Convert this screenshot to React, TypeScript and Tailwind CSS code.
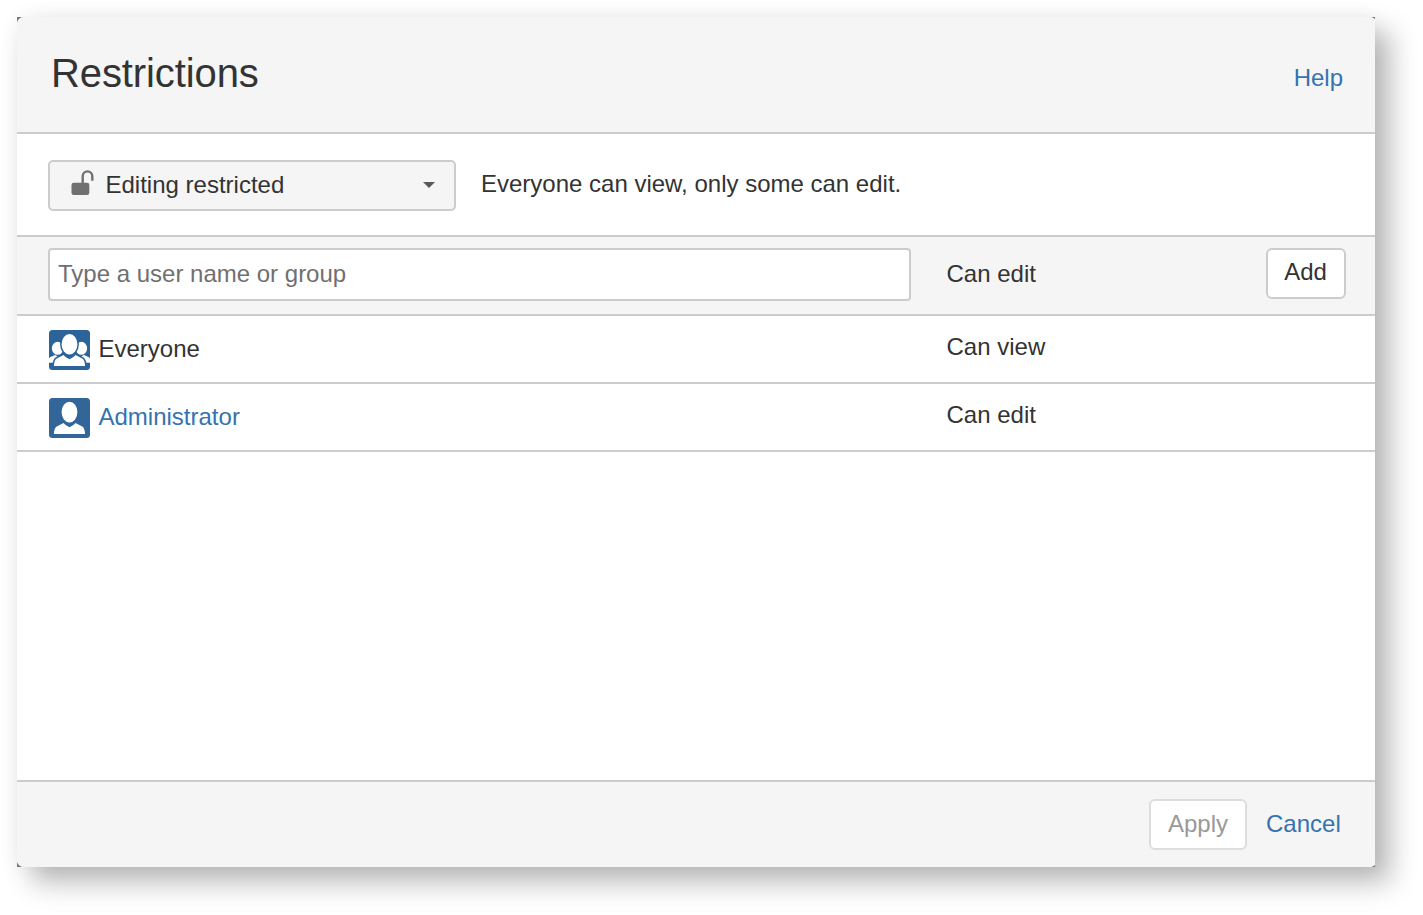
import type { ReactNode } from "react";

const BUST = "M4.900 36c.3-4.800 1.200-6.800 3.800-8l5.800-2.900q1.900 2.700 6 4.100 4.100-1.400 6-4.100l5.800 2.900c2.600 1.200 3.500 3.200 3.800 8z";

function UnlockIcon() {
  return (
    <svg className="ml-[21px] mt-2 h-[26px] w-6 shrink-0" viewBox="0 0 24 26" fill="none">
      <rect x="0.5" y="12.7" width="17.8" height="12.3" rx="2.2" fill="#707070" />
      <path d="M11.700 13V6.200a4.800 4.800 0 0 1 9.600 0V10.800" stroke="#707070" strokeWidth="2.4" />
    </svg>
  );
}

function GroupAvatar() {
  return (
    <svg className="mt-[14px] h-10 w-[41px] shrink-0" viewBox="0 0 41 40">
      <rect width="41" height="40" rx="3.5" fill="#2c6399" />
      <g fill="#fff">
        <ellipse cx="8.600" cy="18.300" rx="5.700" ry="6.500" />
        <ellipse cx="32.400" cy="18.300" rx="5.700" ry="6.500" />
        <path d="M0 32.800V28.700q0-1 1-1.500l5-2.200 4 2v5.800zM41 32.800V28.700q0-1-1-1.500l-5-2.200-4 2v5.800z" />
      </g>
      <path d={BUST} fill="#2c6399" stroke="#2c6399" strokeWidth="3.4" />
      <ellipse cx="20.500" cy="14.300" rx="9.400" ry="11.600" fill="#2c6399" />
      <path d={BUST} fill="#fff" />
      <ellipse cx="20.500" cy="14.300" rx="7.900" ry="10.300" fill="#fff" />
    </svg>
  );
}

function UserAvatar() {
  return (
    <svg className="mt-[14px] h-10 w-[41px] shrink-0" viewBox="0 0 41 40">
      <rect width="41" height="40" rx="3.5" fill="#326598" />
      <g fill="#fff">
        <path d={BUST} />
        <ellipse cx="20.500" cy="14.100" rx="7.900" ry="10.300" />
      </g>
    </svg>
  );
}

function PermissionRow({ avatar, name, permission }: { avatar: ReactNode; name: ReactNode; permission: string }) {
  return (
    <li className="flex h-[68px] border-b-2 border-[#ccc] pl-8">
      {avatar}
      <div className="ml-[8.5px] mt-[19px] w-[848px]">{name}</div>
      <div className="mt-[17px]">{permission}</div>
    </li>
  );
}

export default function App() {
  return (
    <main className="h-[915px] w-[1423px] overflow-hidden bg-white p-[17px] font-['Liberation_Sans',Arial,sans-serif] text-2xl leading-7 text-[#333]">
      <div className="h-[850px] w-[1358px] bg-[#777] shadow-[15px_15px_26px_rgba(0,0,0,0.28),0_0_20px_rgba(0,0,0,0.05)]">
        <section className="flex h-full flex-col overflow-hidden rounded-l-[7px] rounded-r-[6px_3px] bg-white">
          <header className="flex h-[117px] shrink-0 justify-between border-b-2 border-[#ccc] bg-[#f5f5f5] pl-[34px] pr-8">
            <h1 className="mt-[33px] text-[40px] leading-[46px] tracking-[-0.1px]">Restrictions</h1>
            <a href="#" className="mt-[47px] text-[#3572b0]">Help</a>
          </header>
          <div className="flex h-[103px] shrink-0 border-b-2 border-[#ccc] pl-[31px] pt-[26px]">
            <button className="flex h-[51px] w-[408px] rounded-[5px] border-2 border-[#ccc] bg-[#f5f5f5] text-left">
              <UnlockIcon />
              <span className="ml-[10.5px] mt-[9px] flex-1">Editing restricted</span>
              <svg className="mr-[19px] mt-5 h-[6px] w-3" viewBox="0 0 12 6">
                <path d="M0 0h12L6 6z" fill="#595959" />
              </svg>
            </button>
            <p className="ml-[25px] mt-[10px]">Everyone can view, only some can edit.</p>
          </div>
          <div className="flex h-[79px] shrink-0 border-b-2 border-[#ccc] bg-[#f5f5f5] pl-[31px] pt-[11px]">
            <input
              className="h-[53px] w-[863px] rounded-[4px] border-2 border-[#ccc] bg-white pb-0.5 pl-2 placeholder:text-[#707070]"
              placeholder="Type a user name or group"
            />
            <span className="ml-[35.5px] mt-3 w-[319.5px]">Can edit</span>
            <button className="h-[51px] w-20 rounded-[6px] border-2 border-[#ccc] bg-white pb-1 pr-px">Add</button>
          </div>
          <ul className="flex-1">
            <PermissionRow avatar={<GroupAvatar />} name="Everyone" permission="Can view" />
            <PermissionRow
              avatar={<UserAvatar />}
              name={<a href="#" className="text-[#3572b0]">Administrator</a>}
              permission="Can edit"
            />
          </ul>
          <footer className="flex h-[87px] shrink-0 justify-end border-t-2 border-[#ccc] bg-[#f5f5f5] pr-[34.5px] pt-[17px]">
            <button className="mr-[19px] h-[51px] w-[98px] rounded-[6px] border-2 border-[#ddd] bg-white pb-0.5 text-[#999]">Apply</button>
            <a href="#" className="mt-[11px] w-[74.5px] text-[#3572b0]">Cancel</a>
          </footer>
        </section>
      </div>
    </main>
  );
}
